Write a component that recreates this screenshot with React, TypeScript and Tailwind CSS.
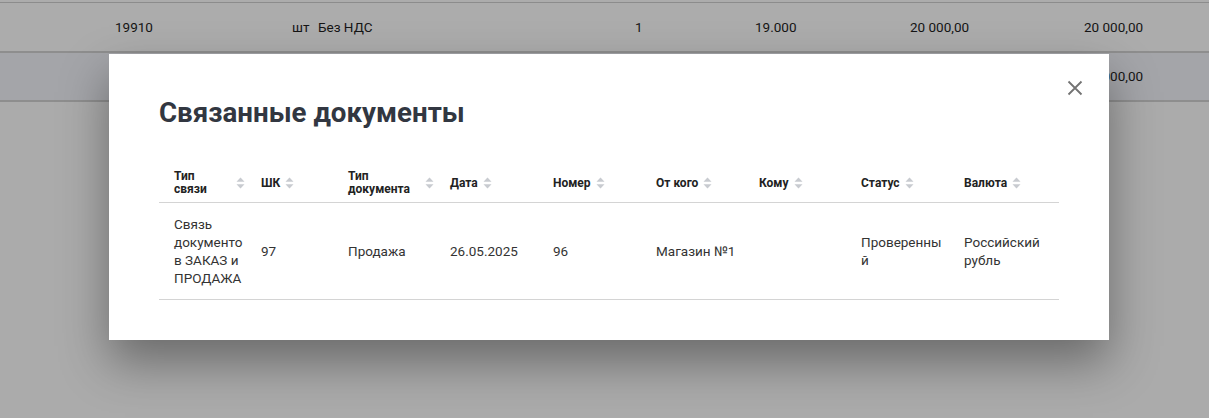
import React from "react";

const cols = [87, 87, 102, 103, 103, 103, 102, 103, 110];

function SortIcon() {
  return (
    <svg width="9" height="12" viewBox="0 0 9 12" className="shrink-0">
      <path d="M4.5 0.5 L8.5 4.8 L0.5 4.8 Z" fill="#c8cbd0" />
      <path d="M4.5 11.5 L8.5 7.2 L0.5 7.2 Z" fill="#c8cbd0" />
    </svg>
  );
}

type H = { lines: string[]; fill?: boolean };
const headers: H[] = [
  { lines: ["Тип", "связи"], fill: true },
  { lines: ["ШК"] },
  { lines: ["Тип", "документа"], fill: true },
  { lines: ["Дата"] },
  { lines: ["Номер"] },
  { lines: ["От кого"] },
  { lines: ["Кому"] },
  { lines: ["Статус"] },
  { lines: ["Валюта"] },
];

const row: string[][] = [
  ["Связь", "документо", "в ЗАКАЗ и", "ПРОДАЖА"],
  ["97"],
  ["Продажа"],
  ["26.05.2025"],
  ["96"],
  ["Магазин №1"],
  [],
  ["Проверенны", "й"],
  ["Российский", "рубль"],
];

export default function App() {
  return (
    <div
      className="relative w-[1209px] h-[418px] overflow-hidden bg-[#ababab]"
      style={{ fontFamily: "Roboto, 'Liberation Sans', sans-serif" }}
    >
      {/* background table */}
      <div className="h-[3px] bg-[#acacac] border-b border-[#8c8c8c]" />
      <div className="h-[50px] flex items-center text-[13.5px] text-[#151515] border-b-2 border-[#8e8e8e] bg-[#acacac]">
        <span className="ml-[115px] w-[177px]">19910</span>
        <span className="w-[26px]">шт</span>
        <span className="w-[317px]">Без НДС</span>
        <span className="w-[120px]">1</span>
        <span className="w-[155px]">19.000</span>
        <span className="w-[174px]">20 000,00</span>
        <span>20 000,00</span>
      </div>
      <div className="h-[49px] flex items-center text-[13.5px] text-[#151515] border-b-2 border-[#8e8e8e] bg-[#a4a5a9]">
        <span className="ml-[1084px]">20 000,00</span>
      </div>

      {/* modal */}
      <div className="absolute left-[109px] top-[54px] w-[1000px] h-[286px] bg-white shadow-[0_22px_45px_rgba(0,0,0,0.38)]">
        <button className="absolute right-[26px] top-[26px] w-[16px] h-[16px] flex items-center justify-center">
          <svg width="16" height="16" viewBox="0 0 16 16">
            <path d="M1.5 1.5 L14.5 14.5 M14.5 1.5 L1.5 14.5" stroke="#737373" strokeWidth="1.8" />
          </svg>
        </button>
        <div className="pl-[50px] pr-[50px] pt-[41px]">
          <h2 className="text-[27.7px] leading-[36px] font-bold text-[#323741]">
            Связанные документы
          </h2>
          <div className="mt-[33px] w-[900px]">
            <div className="flex h-[39px] border-b border-[#d4d4d4] items-center">
              {headers.map((h, i) => (
                <div
                  key={i}
                  style={{ width: cols[i] }}
                  className="pl-[15px] flex items-center text-[12px] font-bold text-[#222] leading-[13px]"
                >
                  <div className={h.fill ? "flex-1" : ""}>
                    {h.lines.map((l, j) => (
                      <div key={j}>{l}</div>
                    ))}
                  </div>
                  <div className={h.fill ? "pr-[1px]" : "ml-[5px]"}>
                    <SortIcon />
                  </div>
                </div>
              ))}
            </div>
            <div className="flex h-[97px] border-b border-[#d4d4d4] items-center">
              {row.map((c, i) => (
                <div
                  key={i}
                  style={{ width: cols[i] }}
                  className="pl-[15px] text-[13.5px] leading-[18px] text-[#333]"
                >
                  {c.map((l, j) => (
                    <div key={j} className="whitespace-nowrap">
                      {l}
                    </div>
                  ))}
                </div>
              ))}
            </div>
          </div>
        </div>
      </div>
    </div>
  );
}
